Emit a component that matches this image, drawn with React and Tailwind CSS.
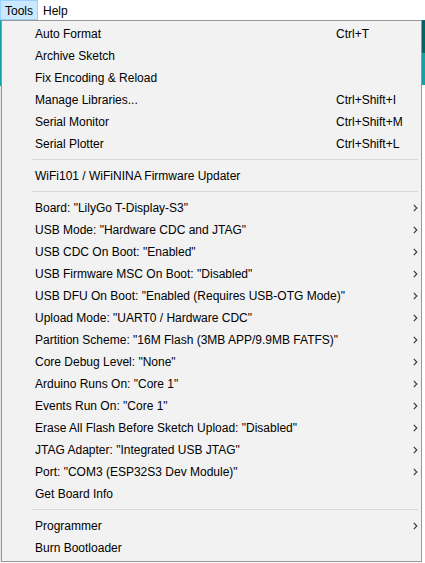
import { Fragment } from "react";

const groups = [
  [
    { label: "Auto Format", key: "Ctrl+T" },
    { label: "Archive Sketch" },
    { label: "Fix Encoding & Reload" },
    { label: "Manage Libraries...", key: "Ctrl+Shift+I" },
    { label: "Serial Monitor", key: "Ctrl+Shift+M" },
    { label: "Serial Plotter", key: "Ctrl+Shift+L" },
  ],
  [{ label: "WiFi101 / WiFiNINA Firmware Updater" }],
  [
    { label: 'Board: "LilyGo T-Display-S3"', sub: true },
    { label: 'USB Mode: "Hardware CDC and JTAG"', sub: true },
    { label: 'USB CDC On Boot: "Enabled"', sub: true },
    { label: 'USB Firmware MSC On Boot: "Disabled"', sub: true },
    { label: 'USB DFU On Boot: "Enabled (Requires USB-OTG Mode)"', sub: true },
    { label: 'Upload Mode: "UART0 / Hardware CDC"', sub: true },
    { label: 'Partition Scheme: "16M Flash (3MB APP/9.9MB FATFS)"', sub: true },
    { label: 'Core Debug Level: "None"', sub: true },
    { label: 'Arduino Runs On: "Core 1"', sub: true },
    { label: 'Events Run On: "Core 1"', sub: true },
    { label: 'Erase All Flash Before Sketch Upload: "Disabled"', sub: true },
    { label: 'JTAG Adapter: "Integrated USB JTAG"', sub: true },
    { label: 'Port: "COM3 (ESP32S3 Dev Module)"', sub: true },
    { label: "Get Board Info" },
  ],
  [{ label: "Programmer", sub: true }, { label: "Burn Bootloader" }],
];

function Chevron() {
  return (
    <svg width="5" height="8" viewBox="0 0 5 8" className="ml-auto mr-[3px]">
      <path d="M0.8 0.8 L3.8 4 L0.8 7.2" fill="none" stroke="#3c3c3c" strokeWidth="1.2" />
    </svg>
  );
}

function MenuItem({ item }) {
  return (
    <div className="flex h-[22px] items-center pt-[2px] pl-[33px] text-black">
      <span className="w-[301px] shrink-0 whitespace-nowrap">{item.label}</span>
      {item.key && <span className="whitespace-nowrap">{item.key}</span>}
      {item.sub && <Chevron />}
    </div>
  );
}

export default function App() {
  return (
    <div className="w-[425px] h-[563px] overflow-hidden bg-white font-['Liberation_Sans',Arial,sans-serif] text-[12px]">
      {/* menubar */}
      <div className="flex h-5 items-stretch bg-white">
        <div className="flex w-[38px] items-center border border-[#99d1ff] bg-[#cce8ff] pt-px pl-[4px]">Tools</div>
        <div className="flex items-center pt-px pl-[5px]">Help</div>
      </div>

      <div className="flex h-[543px]">
        <div className="flex w-px flex-col">
          <div className="h-[66px] bg-[#17a1a5]" />
          <div className="flex-1 bg-[#e6e6e6]" />
        </div>

        {/* dropdown */}
        <div className="h-[542px] w-[421px] border border-[#979797] bg-[#f2f2f2] pt-px pb-[3px]">
          {groups.map((group, gi) => (
            <Fragment key={gi}>
              {gi > 0 && (
                <div className="flex h-[10px] items-center pl-[30px] pr-[3px]">
                  <div className="h-px w-full bg-[#d7d7d7]" />
                </div>
              )}
              {group.map((item) => (
                <MenuItem key={item.label} item={item} />
              ))}
            </Fragment>
          ))}
        </div>

        <div className="flex flex-1 flex-col">
          <div className="h-[33px] bg-[#006468]" />
          <div className="h-[32px] bg-[#17a1a5]" />
          <div className="flex-1 bg-white" />
        </div>
      </div>
    </div>
  );
}
